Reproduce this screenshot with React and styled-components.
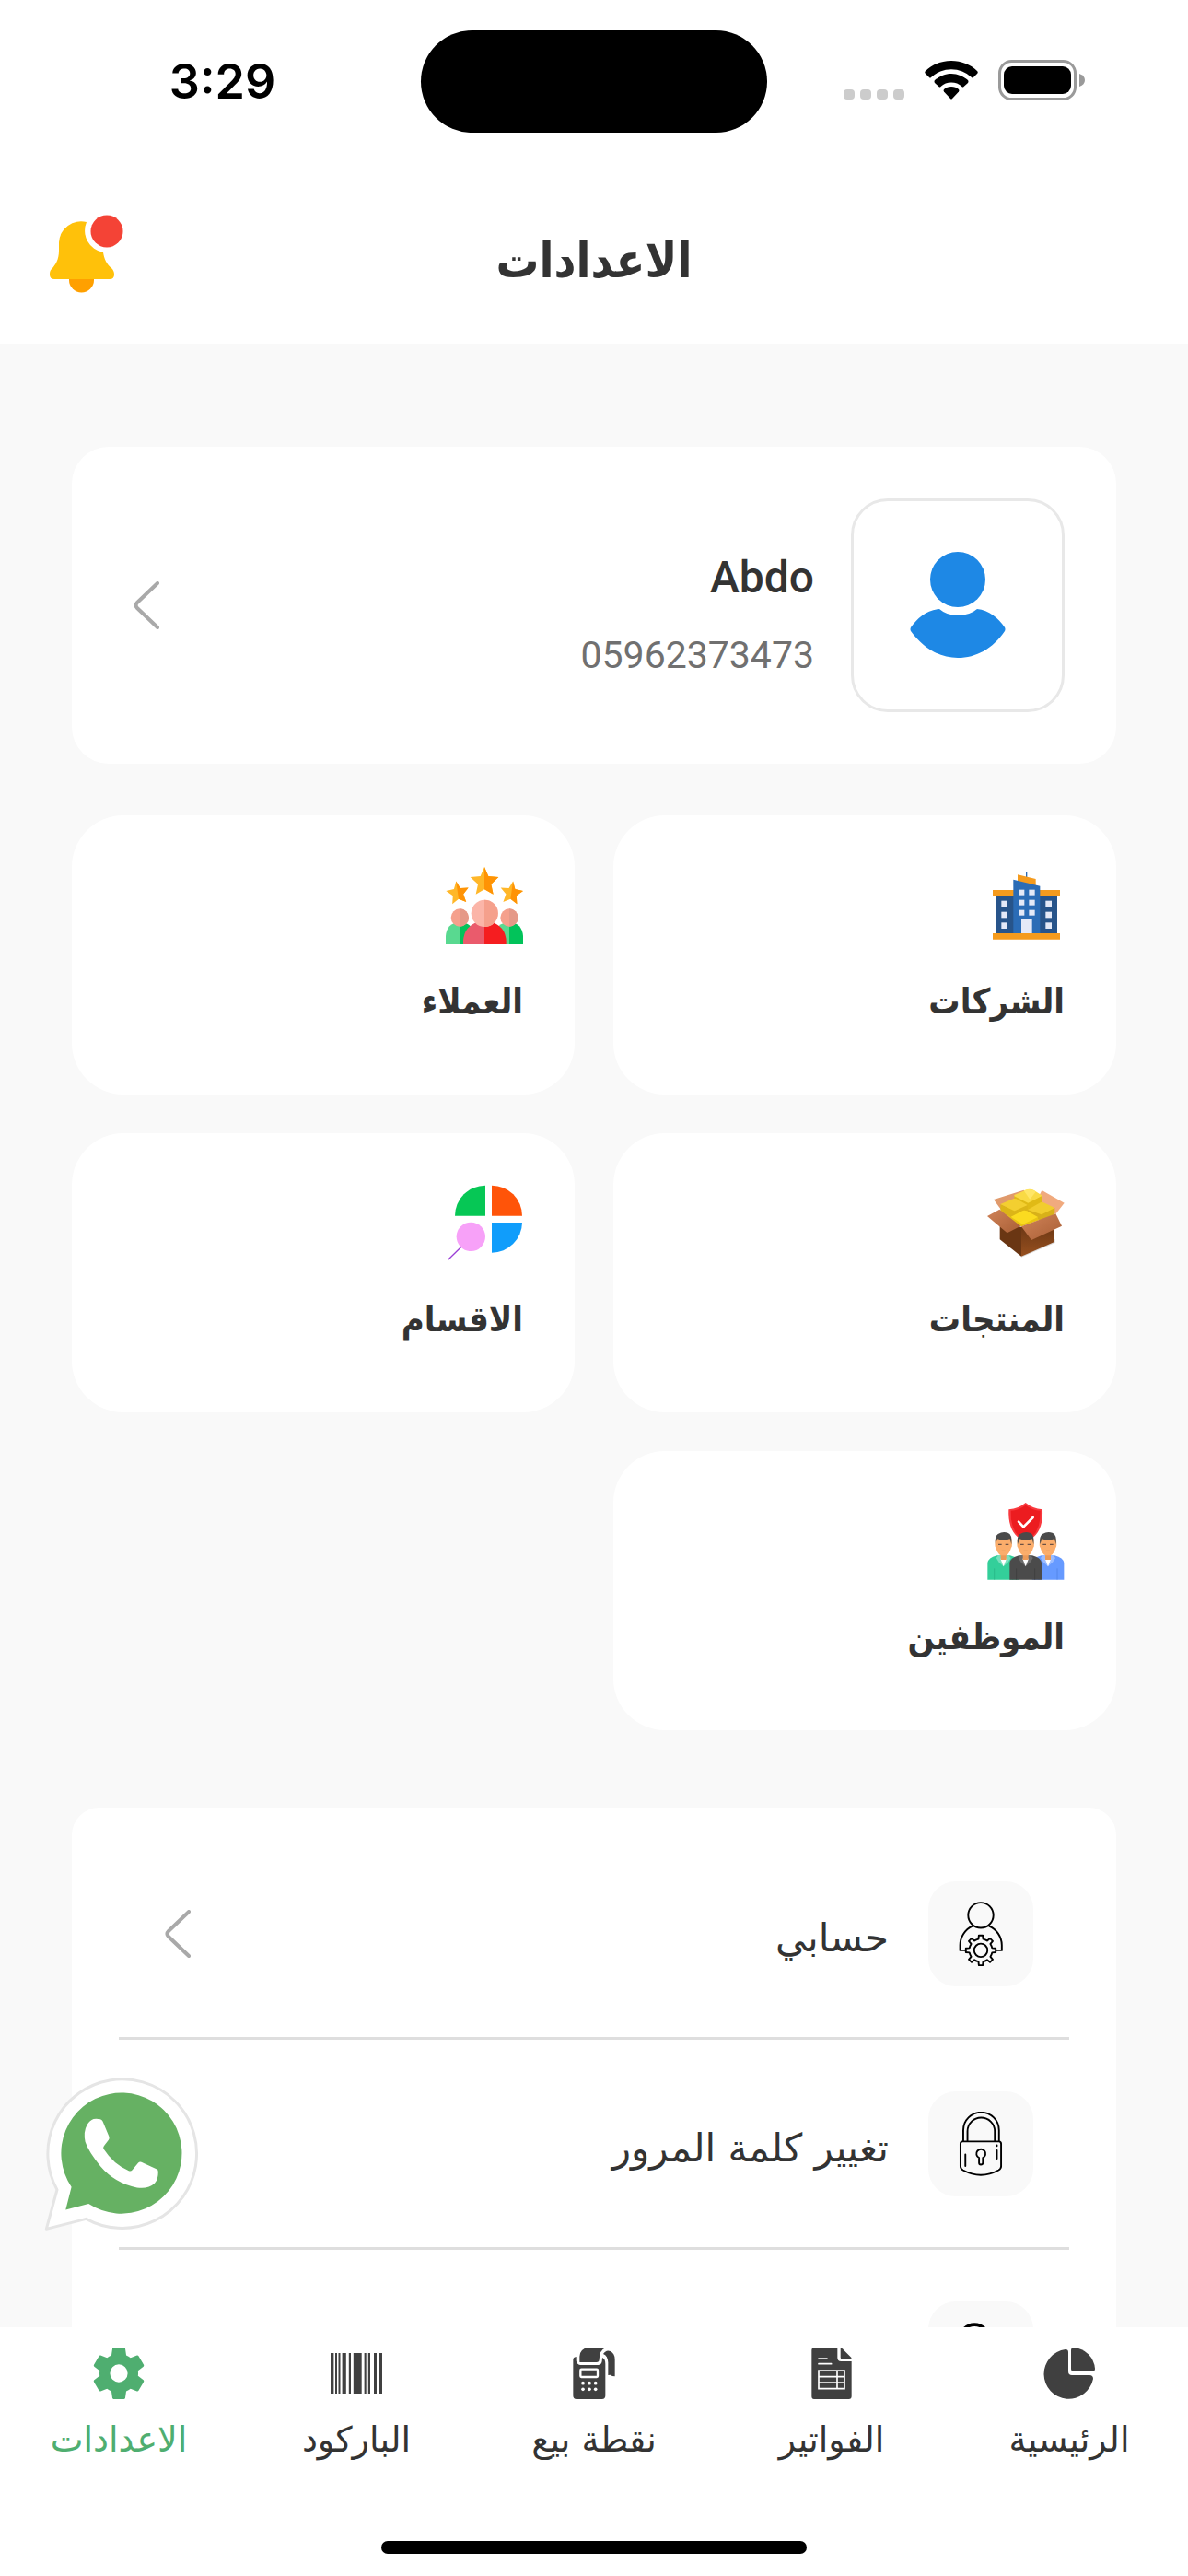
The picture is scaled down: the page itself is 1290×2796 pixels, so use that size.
import React from "react";
import styled, { createGlobalStyle } from "styled-components";

const ink = "#333333";
const green = "#4fae70";
const arabic = `"DejaVu Sans", sans-serif`;
const arabicBold = `"DejaVu Sans Condensed", "DejaVu Sans", sans-serif`;

const GlobalStyle = createGlobalStyle`
  *, *::before, *::after { box-sizing: border-box; }
  body { margin: 0; background: #f9f9f9; }
`;

const Screen = styled.div`
  position: relative;
  display: flex;
  flex-direction: column;
  height: 100vh;
  background: #f9f9f9;
  color: ${ink};
  font-family: ${arabic};
`;

const StatusBar = styled.div`
  display: grid;
  grid-template-columns: 1fr 376px 1fr;
  align-items: center;
  justify-items: center;
  padding: 33px 0;
  background: #fff;
  direction: ltr;
`;

const Clock = styled.time`
  padding-left: 26px;
  font: 600 52px/64px Inter, sans-serif;
  color: #000;
`;

const Island = styled.div`
  width: 100%;
  height: 111px;
  border-radius: 56px;
  background: #000;
`;

const StatusIcons = styled.div`
  display: flex;
  align-items: center;
  gap: 22px;
  padding: 0 30px 4px 0;
`;

const Header = styled.header`
  display: grid;
  grid-template-columns: 1fr auto 1fr;
  align-items: center;
  height: 196px;
  padding: 0 54px;
  background: #fff;
`;

const Title = styled.h1`
  grid-column: 2;
  margin: 0;
  padding-top: 16px;
  font: 700 52px/72px ${arabicBold};
`;

const IconButton = styled.button`
  justify-self: end;
  display: flex;
  padding: 0;
  border: 0;
  background: none;
  cursor: pointer;
`;

const Main = styled.main`
  flex: 1;
  min-height: 0;
  overflow-y: auto;
  scrollbar-width: none;
  padding: 112px 78px 0;
`;

const ProfileCard = styled.button`
  display: flex;
  align-items: center;
  gap: 40px;
  width: 100%;
  padding: 56px;
  border: 0;
  border-radius: 40px;
  background: #fff;
  color: inherit;
  text-align: start;
  cursor: pointer;
`;

const Avatar = styled.span`
  display: flex;
  align-items: center;
  justify-content: center;
  width: 232px;
  height: 232px;
  border: 3px solid #e8e8e8;
  border-radius: 40px;
`;

const ProfileText = styled.span`
  flex: 1;
  display: flex;
  flex-direction: column;
  gap: 20px;
  padding-top: 24px;
  font-family: Roboto, sans-serif;
`;

const Name = styled.span`
  font-size: 48px;
  line-height: 64px;
  font-weight: 500;
`;

const Phone = styled.span`
  font-size: 41px;
  line-height: 64px;
  color: #707070;
`;

const ChevronBox = styled.span`
  display: flex;
  padding-left: 11px;
`;

const Tiles = styled.nav`
  display: grid;
  grid-template-columns: 1fr 1fr;
  gap: 42px;
  margin-top: 56px;
`;

const Tile = styled.a`
  display: flex;
  flex-direction: column;
  align-items: flex-start;
  gap: 26px;
  padding: 56px 56px 65px;
  border-radius: 56px;
  background: #fff;
  color: inherit;
  text-decoration: none;
`;

const TileLabel = styled.span`
  font: 700 38px/72px ${arabicBold};
`;

const List = styled.ul`
  margin: 84px 0 0;
  padding: 24px 51px;
  border-radius: 30px;
  background: #fff;
  list-style: none;
`;

const ListItem = styled.li`
  border-bottom: 3px solid #dedede;
  &:last-child { border-bottom: 0; }
`;

const ListButton = styled.button`
  display: flex;
  align-items: center;
  gap: 43px;
  width: 100%;
  height: 225px;
  padding: 0 39px 0 50px;
  border: 0;
  background: none;
  color: inherit;
  text-align: start;
  cursor: pointer;
`;

const ListIcon = styled.span`
  display: flex;
  align-items: center;
  justify-content: center;
  width: 114px;
  height: 114px;
  border-radius: 30px;
  background: #f9f9f9;
`;

const ListLabel = styled.span`
  flex: 1;
  padding-top: 10px;
  font: 400 42px/72px ${arabic};
`;

const WhatsappButton = styled.button`
  position: absolute;
  left: 48px;
  bottom: 375px;
  display: flex;
  padding: 0;
  border: 0;
  background: none;
  cursor: pointer;
`;

const TabBar = styled.nav`
  display: grid;
  grid-template-columns: repeat(5, 1fr);
  padding: 22px 0 74px;
  background: #fff;
`;

const Tab = styled.a`
  display: flex;
  flex-direction: column;
  align-items: center;
  gap: 8px;
  color: ${(p) => (p.$active ? green : ink)};
  font-size: 38px;
  line-height: 72px;
  text-decoration: none;
  white-space: nowrap;
`;

const HomeArea = styled.div`
  display: flex;
  justify-content: center;
  padding-bottom: 24px;
  background: #fff;
`;

const HomeIndicator = styled.div`
  width: 462px;
  height: 14px;
  border-radius: 7px;
  background: #000;
`;

/* ---------- status icons ---------- */

const Dots = () => (
  <svg width="66" height="42" viewBox="0 0 66 42" aria-hidden="true">
    {[0, 18, 36, 54].map((x) => (
      <rect key={x} x={x} y="31" width="12" height="11" rx="4" fill="#cccccc" />
    ))}
  </svg>
);

const Wifi = () => (
  <svg width="58" height="42" viewBox="0 0 58 42" aria-hidden="true">
    <path d="M29 0C40 0 50 4 57 11Q58.500 12.500 57 14L53 18Q52 19 51 18A32 32 0 0 0 7 18Q6 19 5 18L1 14Q-.5 12.500 1 11C8 4 18 0 29 0Z" />
    <path d="M29 14C36 14 42 17 47 21Q48 22.500 47 24L42.500 28Q41.500 29 40.500 28A17 17 0 0 0 17.500 28Q16.500 29 15.500 28L11 24Q10 22.500 11 21C16 17 22 14 29 14Z" />
    <path d="M29 28C32 28 35 29 37 31Q38 32 37 33.500L30 41Q29 42 28 41L21 33.500Q20 32 21 31C23 29 26 28 29 28Z" />
  </svg>
);

const Battery = () => (
  <svg width="94" height="44" viewBox="0 0 94 44" aria-hidden="true">
    <rect x="1.500" y="1.500" width="82" height="41" rx="13" fill="none" stroke="#9a9a9a" strokeWidth="3" />
    <rect x="6" y="7" width="73" height="30" rx="9" />
    <path d="M88 15Q94 17 94 22Q94 27 88 29Z" fill="#9a9a9a" />
  </svg>
);

const Bell = () => (
  <svg width="80" height="85" viewBox="54 233 80 85" aria-hidden="true">
    <path fill="#ffa000" d="M75 301H102V304A13.500 13.500 0 0 1 75 304Z" />
    <path
      fill="#ffc10a"
      d="M94 241A24 24 0 0 0 64 263V272C64 282 60 288 56 292C54 294 54 296 54 298Q54 303 59 303H119Q124 303 124 298C124 295 123 293 121 291C116 287 113 281 112 274A24 24 0 0 1 94 241Z"
    />
    <circle cx="116" cy="251" r="17.500" fill="#f44336" />
  </svg>
);

const Chevron = () => (
  <svg width="28" height="52" viewBox="0 0 28 52" aria-hidden="true">
    <path d="M26 2L4 23Q1 26 4 29L26 50" fill="none" stroke="#a9a9a9" strokeWidth="4" strokeLinecap="round" />
  </svg>
);

const UserIcon = () => (
  <svg width="104" height="116" viewBox="988 599 104 116" aria-hidden="true" fill="#1e88e5">
    <circle cx="1040" cy="629" r="30" />
    <path d="M1020 661C1006 662 996 671 989 681Q988 683 989 685C1003 704 1020 714 1040 714C1060 714 1078 704 1091 685Q1092 683 1091 681C1084 671 1074 662 1061 661Q1053 668 1040 668Q1028 668 1020 661Z" />
  </svg>
);

/* ---------- tile icons ---------- */

const TileSvg = ({ box, children }) => (
  <svg width="84" height="84" viewBox={box} aria-hidden="true">{children}</svg>
);

const Building = () => (
  <TileSvg box="276 121 252 252">
    <path stroke="#2a6bb4" strokeWidth="4" d="M404 138V158" />
    <path fill="#f59b1d" d="M375 146L434 160V182L375 168Z" />
    <path fill="#27548a" d="M305 214H504V338H305Z" />
    <path fill="#f59b1d" d="M294 196H513V216H294ZM294 337H513V357H294Z" />
    <path fill="#2b6cb6" d="M361 162L448 183V337H361Z" />
    {[378, 412].flatMap((x) => [195, 228, 261].map((y) => (
      <rect key={`${x}${y}`} x={x} y={y} width="19" height="18" fill="#e4e9f7" />
    )))}
    {[322, 466].flatMap((x) => [231, 267, 302].map((y) => (
      <rect key={`${x}${y}`} x={x} y={y} width="20" height="20" fill="#e4e9f7" />
    )))}
    <rect x="387" y="292" width="35" height="45" fill="#e4e9f7" />
  </TileSvg>
);

const Star = ({ t }) => (
  <g transform={t}>
    <path fill="#ffb729" d="M0 -47L13 -17L46 -14L22 9L29 42L0 26L-28 42L-21 9L-46 -14L-13 -17Z" />
    <path fill="#ff9305" d="M0 -47L13 -17L46 -14L22 9L29 42L0 26Z" />
  </g>
);

const Customers = () => (
  <TileSvg box="132 121 252 252">
    <Star t="translate(258 168)" />
    <Star t="translate(171 205) rotate(-8) scale(.8)" />
    <Star t="translate(346 205) rotate(8) scale(.8)" />
    <path fill="#59d990" d="M132 373V347Q134 304 178 300V373Z" />
    <path fill="#02c35a" d="M178 300Q212 302 222 330V373H178Z" />
    <path fill="#59d990" d="M339 300Q304 302 294 330V373H339Z" />
    <path fill="#02c35a" d="M384 373V347Q382 304 339 300V373Z" />
    <circle cx="178" cy="286" r="29" fill="#f5a08c" />
    <path fill="#e59988" d="M178 257A29 29 0 0 1 178 315Z" />
    <circle cx="339" cy="286" r="29" fill="#f5a08c" />
    <path fill="#e59988" d="M339 257A29 29 0 0 1 339 315Z" />
    <path fill="#ea5b6c" d="M189 373V362Q192 304 258 296V373Z" />
    <path fill="#f51d20" d="M329 373V362Q326 304 258 296V373Z" />
    <circle cx="259" cy="272" r="44" fill="#fbb5a8" />
    <path fill="#f5a08c" d="M258 228A44 44 0 0 1 258 316Z" />
  </TileSvg>
);

const Departments = () => (
  <TileSvg box="252 109 252 252">
    <path fill="#06c755" d="M381 111V210H282A99 99 0 0 1 381 111Z" />
    <path fill="#ff5409" d="M402 111A99 99 0 0 1 501 210H402Z" />
    <path fill="#109dfb" d="M402 232H501A99 99 0 0 1 402 330Z" />
    <path stroke="#9a3fd5" strokeWidth="4" strokeLinecap="round" d="M303 311L260 353" />
    <circle cx="334" cy="278" r="47" fill="#f7a1f8" />
  </TileSvg>
);

const Products = () => (
  <TileSvg box="339 109 252 252">
    <defs>
      <linearGradient id="boxFront" x1="0" y1="0" x2="0" y2="1">
        <stop offset="0" stopColor="#663413" />
        <stop offset="1" stopColor="#97501f" />
      </linearGradient>
      <linearGradient id="boxFlap" x1="0" y1="0" x2="1" y2="1">
        <stop offset="0" stopColor="#d08358" />
        <stop offset="1" stopColor="#a95f36" />
      </linearGradient>
    </defs>
    <path fill="#dddddd" d="M450 345L560 298V286L452 330Z" />
    <path fill="#e09a6c" d="M360 157L458 126L470 150L384 190Z" />
    <path fill="#f0aa7e" d="M517 127L590 168L562 204L500 160Z" />
    <path fill="#e8c21c" d="M384 188L470 150L558 190V206L450 245L384 212Z" />
    <path fill="#6a3613" d="M380 234L450 246V342L380 287Z" />
    <path fill="url(#boxFront)" d="M450 246L558 230V295L450 342Z" />
    <path fill="#e0ba16" d="M427 142V172L472 196L516 176V144L472 166Z" />
    <path fill="#f9da45" d="M427 142L470 124Q480 122 490 126L516 143V146L472 168L427 146Z" />
    <path fill="#ffe667" d="M458 128Q478 119 498 131L478 156Z" />
    <path fill="#dcb517" d="M382 172V194L420 216L470 192V174L427 194Z" />
    <path fill="#f3cf30" d="M382 172L425 154Q430 153 434 155L470 175L428 194Z" />
    <path fill="#d8b119" d="M471 190V204L516 226L559 203V184L516 204Z" />
    <path fill="#f1cd2e" d="M471 190L512 167Q517 164 523 167L559 184L516 206Z" />
    <path fill="#e9c412" d="M416 214V224L452 244L504 222V214L453 238Z" />
    <path fill="#fbdb20" d="M416 213L455 193Q462 191 468 194L504 214L455 238Z" />
    <path fill="url(#boxFlap)" d="M339 211L379 189L448 243L404 266Z" />
    <path fill="url(#boxFlap)" d="M450 245L562 203L582 243L483 289Z" />
  </TileSvg>
);

const Worker = ({ x, coat, lapel, edge }) => (
  <g transform={`translate(${x} 0)`}>
    <path fill={coat} d="M-52 347V292Q-50 276 -22 268H22Q50 276 52 292V347Z" />
    <path stroke={edge} strokeWidth="2" d="M-30 310V347M30 310V347" />
    <path fill={lapel} d="M-17 268L-24 276L-16 289L0 304L16 289L24 276L17 268Z" />
    <path fill="#ffffff" d="M-10 278H10L0 304Z" />
    <path fill="#ec9a58" d="M-9 258H9V282H-9Z" />
    <path fill="#fbad6b" d="M-26 212H26Q30 240 25 242Q20 262 8 268H-8Q-20 262 -25 242Q-30 240 -26 212Z" />
    <path fill="#4a4a4a" d="M-26 232Q-30 206 -18 198Q-2 188 14 194Q29 198 26 232L21 214Q0 222 -20 214Z" />
    <path stroke="#6b5144" strokeWidth="4" d="M-17 232H-6M6 232H17" />
    <path stroke="#c97b4b" strokeWidth="2" d="M-6 253H6" />
  </g>
);

const Employees = () => (
  <TileSvg box="339 96 252 252">
    <path fill="#f93a3f" d="M464 96Q486 115 519 118Q522 180 490 208H438Q406 180 409 118Q442 115 464 96Z" />
    <path fill="#ec1c20" d="M464 104Q486 120 512 122Q514 178 486 206H442Q414 178 416 122Q442 120 464 104Z" />
    <path fill="none" stroke="#ffffff" strokeWidth="8" strokeLinecap="round" strokeLinejoin="round" d="M441 158L457 175L488 144" />
    <Worker x={392} coat="#33cf9a" lapel="#7be0be" edge="#27b183" />
    <Worker x={537} coat="#669aff" lapel="#9bbcff" edge="#4d7fe0" />
    <Worker x={464} coat="#4b4b4b" lapel="#6b6b6b" edge="#3a3a3a" />
  </TileSvg>
);

/* ---------- list icons ---------- */

const ListSvg = ({ box, children }) => (
  <svg width="70" height="70" viewBox={box} fill="none" stroke="#000" strokeWidth="5" strokeLinejoin="round" strokeLinecap="round" aria-hidden="true">
    {children}
  </svg>
);

const gearOutline = (cx, cy, outer, inner, teeth) => {
  const step = (Math.PI * 2) / teeth;
  const at = (r, a) => `${(cx + r * Math.sin(a)).toFixed(1)} ${(cy - r * Math.cos(a)).toFixed(1)}`;
  let d = "";
  for (let i = 0; i < teeth; i += 1) {
    const a = i * step;
    d += `${i ? "L" : "M"}${at(outer, a - 0.13)}L${at(outer, a + 0.13)}L${at(inner, a + 0.2)}`;
    d += `A${inner} ${inner} 0 0 1 ${at(inner, a + step - 0.2)}`;
  }
  return `${d}Z`;
};

const AccountIcon = () => (
  <ListSvg box="1018 326 184 184">
    <circle cx="1110" cy="365" r="36" />
    <path d="M1066 465H1051V450A60 60 0 0 1 1086 396M1154 465H1170V450A60 60 0 0 0 1134 396" />
    <path d={gearOutline(1110, 465, 43, 33, 8)} />
    <circle cx="1110" cy="465" r="19" />
  </ListSvg>
);

const LockIcon = () => (
  <ListSvg box="1018 922 184 184">
    <path d="M1060 1006V975A50 50 0 0 1 1162 975V1006M1072 1006V978A38 38 0 0 1 1150 978V1006" />
    <path d="M1058 1007H1162Q1168 1007 1168 1014V1078Q1168 1085 1161 1089Q1110 1116 1059 1089Q1052 1085 1052 1078V1014Q1052 1007 1058 1007Z" />
    <path d="M1105 1054A13 13 0 1 1 1116 1054V1068Q1116 1073 1110 1073Q1105 1073 1105 1068Z" />
    <path d="M1066 1044V1077M1156 1032V1056M1156 1018V1020" />
  </ListSvg>
);

const SupportIcon = () => (
  <ListSvg box="1018 1518 184 184">
    <circle cx="1092" cy="1566" r="40" strokeWidth="10" />
  </ListSvg>
);

const Whatsapp = () => (
  <svg width="168" height="168" viewBox="145 160 505 505" aria-hidden="true">
    <path
      fill="#fff"
      stroke="#e5e5e5"
      strokeWidth="9"
      strokeLinejoin="round"
      d="M187 532A243 243 0 1 1 282 627L152 660Z"
    />
    <path fill="#66b163" d="M234 523A197 197 0 1 1 290 578L215 597Z" />
    <path
      fill="#fff"
      d="M306 301Q317 299 328 302Q333 303 336 309L356 357Q359 364 355 370L340 389Q336 394 339 399Q372 450 421 470Q428 473 432 468L452 444Q456 440 462 442L511 464Q518 467 517 474Q517 499 506 510Q484 531 448 525Q376 511 329 456Q289 407 279 376Q272 343 285 320Q294 305 306 301Z"
    />
  </svg>
);

/* ---------- tab icons ---------- */

const TabSvg = ({ box, children }) => (
  <svg width="56" height="56" viewBox={box} fill="#404040" aria-hidden="true">{children}</svg>
);

const PieIcon = () => (
  <TabSvg box="1133 2548 56 56">
    <path d="M1160 2553V2574Q1160 2578 1164 2578H1183Q1187 2578 1187 2582A27 27 0 1 1 1157 2550Q1160 2550 1160 2553Z" />
    <path d="M1163 2551Q1163 2548 1166 2548A25 25 0 0 1 1189 2571Q1189 2574 1186 2574H1166Q1163 2574 1163 2571Z" />
  </TabSvg>
);

const InvoiceIcon = () => (
  <TabSvg box="795 23 168 168">
    <path d="M822 24H898V56Q898 68 910 68H944V182Q944 191 935 191H822Q814 191 814 182V32Q814 24 822 24Z" />
    <path d="M908 24Q911 24 914 27L941 54Q944 57 944 60H912Q908 60 908 55Z" />
    <path stroke="#fff" strokeWidth="5" strokeLinecap="round" d="M837 59H864M837 76H878" />
    <path fill="none" stroke="#fff" strokeWidth="5" d="M837 98H921V157H837ZM837 118H921M837 137H921M897 98V157" />
  </TabSvg>
);

const PosIcon = () => (
  <TabSvg box="21 23 168 168">
    <path d="M37 62Q37 55 47 53V66Q49 79 60 80H118Q129 80 131 68L132 56Q142 60 142 76V180Q142 191 131 191H48Q37 191 37 180Z" />
    <path d="M58 70V52Q60 26 86 23H143Q122 32 122 62Q122 71 113 71H59Z" />
    <path d="M135 44Q145 29 158 35Q173 42 173 62V117Q164 117 158 112L151 113V72Q150 50 135 44Z" />
    <rect x="61" y="94" width="56" height="25" fill="none" stroke="#fff" strokeWidth="7" rx="3" />
    {[69, 90, 110].flatMap((x) => [139, 159].map((y) => (
      <circle key={`${x}${y}`} cx={x} cy={y} r="5.500" fill="#fff" />
    )))}
  </TabSvg>
);

const bars = [[0, 3.4], [5, 2], [8.5, 2], [12.6, 4.2], [19.8, 2.2], [24.8, 8.9], [36.6, 2.1], [40.8, 2.2], [47, 3], [52, 4]];

const BarcodeIcon = () => (
  <TabSvg box="0 0 56 56">
    {bars.map(([x, w]) => <rect key={x} x={x} y="6" width={w} height="44" />)}
  </TabSvg>
);

const GearIcon = () => (
  <svg width="56" height="56" viewBox="2.4 2.4 19.2 19.2" fill={green} aria-hidden="true">
    <path d="M19.14 12.94c.04-.3.06-.61.06-.94 0-.32-.02-.64-.07-.94l2.03-1.58c.18-.14.23-.41.12-.61l-1.92-3.32c-.12-.22-.37-.29-.59-.22l-2.39.96c-.5-.38-1.03-.7-1.62-.94L14.400 2.810c-.04-.24-.24-.41-.48-.41h-3.840c-.24 0-.43.17-.47.41L9.250 5.350C8.660 5.590 8.120 5.920 7.630 6.290L5.240 5.330c-.22-.08-.47 0-.59.22L2.740 8.870C2.620 9.080 2.660 9.340 2.860 9.480l2.030 1.580C4.840 11.360 4.800 11.690 4.800 12s.02.64.07.94l-2.030 1.580c-.18.14-.23.41-.12.61l1.920 3.320c.12.22.37.29.59.22l2.390-.96c.5.38 1.030.7 1.620.94l.36 2.540c.05.24.24.41.48.41h3.840c.24 0 .44-.17.47-.41l.36-2.540c.59-.24 1.130-.56 1.620-.94l2.390.96c.22.08.47 0 .59-.22l1.920-3.320c.12-.22.07-.47-.12-.61zM12 15.300A3.300 3.300 0 1 1 12 8.700A3.300 3.300 0 0 1 12 15.300z" />
  </svg>
);

const tiles = [
  { label: "الشركات", Icon: Building },
  { label: "العملاء", Icon: Customers },
  { label: "المنتجات", Icon: Products },
  { label: "الاقسام", Icon: Departments },
  { label: "الموظفين", Icon: Employees },
];

const rows = [
  { id: "account", label: "حسابي", Icon: AccountIcon, chevron: true },
  { id: "password", label: "تغيير كلمة المرور", Icon: LockIcon },
  { id: "support", Icon: SupportIcon },
];

const tabs = [
  { label: "الرئيسية", Icon: PieIcon },
  { label: "الفواتير", Icon: InvoiceIcon },
  { label: "نقطة بيع", Icon: PosIcon },
  { label: "الباركود", Icon: BarcodeIcon },
  { label: "الاعدادات", Icon: GearIcon, active: true },
];

export default function App() {
  return (
    <Screen dir="rtl" lang="ar">
      <GlobalStyle />
      <StatusBar>
        <Clock>3:29</Clock>
        <Island />
        <StatusIcons>
          <Dots />
          <Wifi />
          <Battery />
        </StatusIcons>
      </StatusBar>
      <Header>
        <Title>الاعدادات</Title>
        <IconButton type="button"><Bell /></IconButton>
      </Header>
      <Main>
        <ProfileCard type="button">
          <Avatar><UserIcon /></Avatar>
          <ProfileText>
            <Name>Abdo</Name>
            <Phone>05962373473</Phone>
          </ProfileText>
          <ChevronBox><Chevron /></ChevronBox>
        </ProfileCard>
        <Tiles>
          {tiles.map(({ label, Icon }) => (
            <Tile key={label} href="#">
              <Icon />
              <TileLabel>{label}</TileLabel>
            </Tile>
          ))}
        </Tiles>
        <List>
          {rows.map(({ id, label, Icon, chevron }) => (
            <ListItem key={id}>
              <ListButton type="button">
                <ListIcon><Icon /></ListIcon>
                {label && <ListLabel>{label}</ListLabel>}
                {chevron && <Chevron />}
              </ListButton>
            </ListItem>
          ))}
        </List>
      </Main>
      <TabBar>
        {tabs.map(({ label, Icon, active }) => (
          <Tab key={label} href="#" $active={active} aria-current={active ? "page" : undefined}>
            <Icon />
            {label}
          </Tab>
        ))}
      </TabBar>
      <HomeArea><HomeIndicator /></HomeArea>
      <WhatsappButton type="button"><Whatsapp /></WhatsappButton>
    </Screen>
  );
}
